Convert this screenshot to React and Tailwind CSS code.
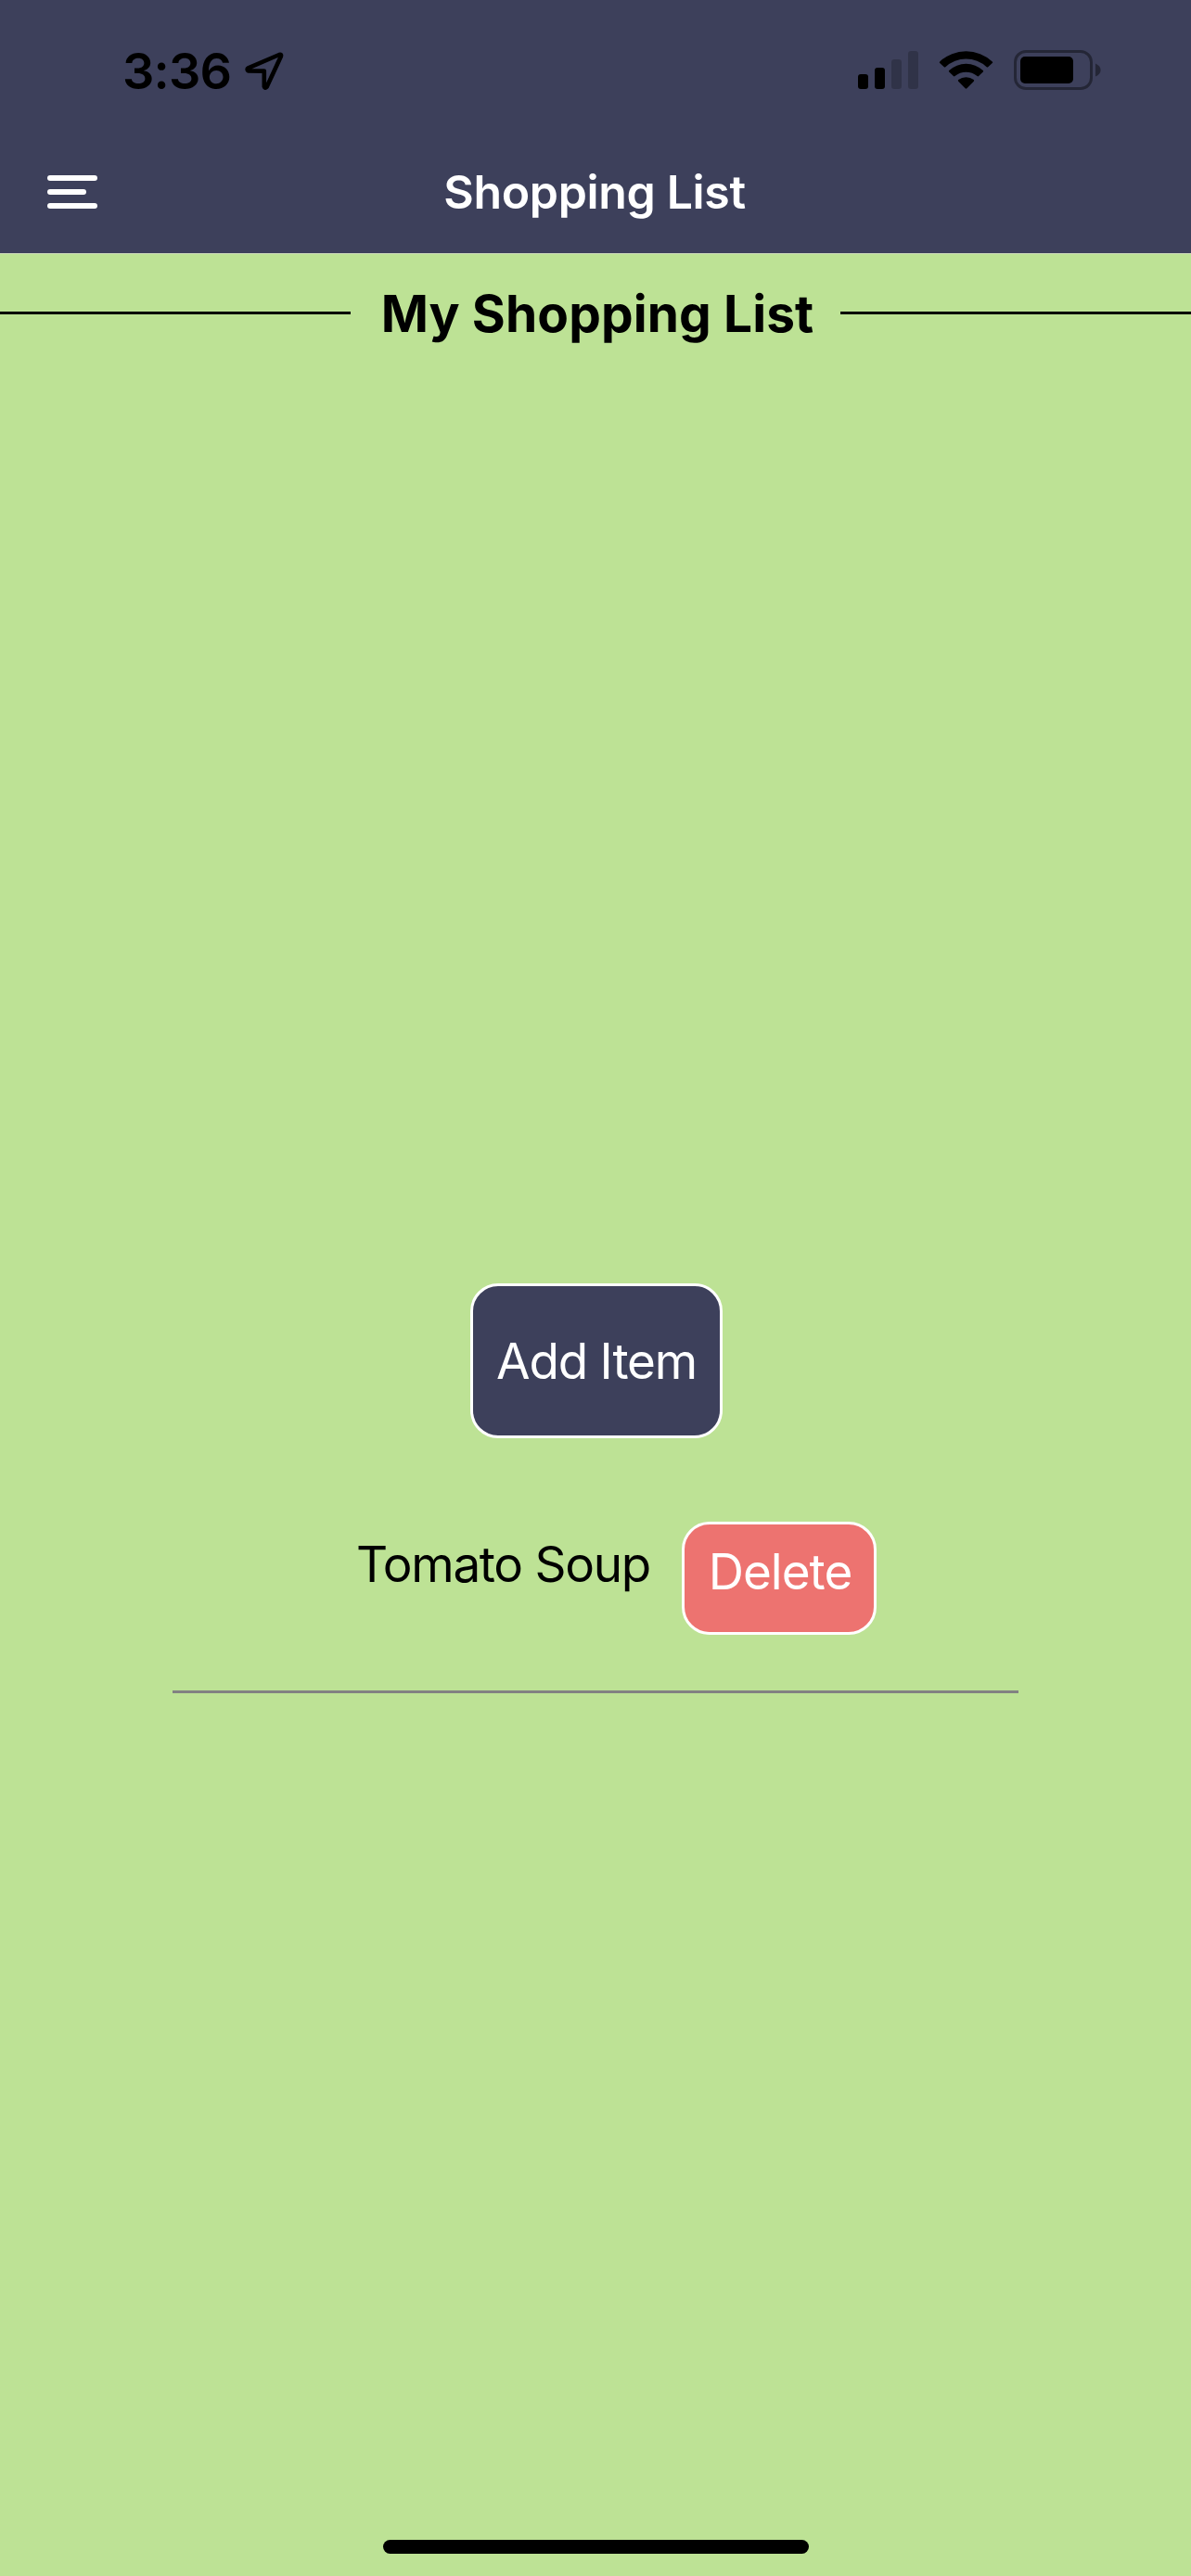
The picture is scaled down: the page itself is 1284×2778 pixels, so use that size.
function StatusBar() {
  return (
    <div className="flex h-[141px] items-start justify-between pl-[132px] pr-[97px]">
      <div className="flex h-[154px] items-center">
        <span className="w-[132px] whitespace-nowrap text-[54px] font-semibold leading-none tracking-[-0.8px]">3:36</span>
        <svg width="42" height="42" viewBox="0 0 42 42" fill="none" stroke="#000" strokeWidth="4.6" strokeLinejoin="round">
          <path d="M2.6 18.6 Q2.6 17.9 3.6 17.4 L37 3 Q39.8 2.2 38.8 5 L23.6 37.8 Q21.6 40 20.8 37.4 L20.8 20.6 L4 20.4 Q2.6 20.2 2.6 18.6 Z" />
        </svg>
      </div>
      <svg className="mt-[48px]" width="264" height="54" viewBox="923 48 264 54">
        <rect x="925" y="80" width="11" height="16" rx="3" />
        <rect x="943" y="73" width="11" height="23" rx="3" />
        <rect x="961" y="64" width="11" height="32" rx="3" fillOpacity="0.2" />
        <rect x="979" y="55" width="11" height="41" rx="3" fillOpacity="0.2" />
        <path d="M1013.2 66.4 Q1012.4 67.2 1013.2 68 L1017.8 72.3 Q1018.5 72.9 1019.3 72.2 A32.5 32.5 0 0 1 1063.7 72.2 Q1064.5 72.9 1065.2 72.3 L1069.8 68 Q1070.6 67.2 1069.8 66.4 A41.5 41.5 0 0 0 1013.2 66.4 Z" />
        <path d="M1023.2 76 Q1022.4 76.8 1023.2 77.6 L1027.9 82.1 Q1028.7 82.8 1029.5 82.1 A18.5 18.5 0 0 1 1053.5 82.1 Q1054.3 82.8 1055.1 82.1 L1059.8 77.6 Q1060.6 76.8 1059.8 76 A27 27 0 0 0 1023.2 76 Z" />
        <path d="M1033.2 86 Q1032.4 86.9 1033.2 87.7 L1040.6 95.2 Q1041.5 96.1 1042.4 95.2 L1049.8 87.7 Q1050.6 86.9 1049.8 86 A13.5 13.5 0 0 0 1033.2 86 Z" />
        <rect x="1094.5" y="55.5" width="82" height="40" rx="11.5" fill="none" stroke="#000" strokeOpacity="0.4" strokeWidth="3" />
        <rect x="1100" y="61" width="57" height="29" rx="5" />
        <path d="M1181 68.5 Q1186.6 71 1186.6 75.5 Q1186.6 80 1181 82.5 Z" fillOpacity="0.4" />
      </svg>
    </div>
  );
}

function NavBar() {
  return (
    <div className="grid h-[133px] grid-cols-[1fr_auto_1fr] items-center border-b border-[#d0dcbc]">
      <button aria-label="Menu" className="flex w-[105px] flex-col items-start gap-[9px] pl-[51px]">
        <span className="h-[6px] w-[54px] rounded-full bg-white" />
        <span className="h-[6px] w-[42px] rounded-full bg-white" />
        <span className="h-[6px] w-[54px] rounded-full bg-white" />
      </button>
      <h1 className="whitespace-nowrap pr-[2px] text-[50px] font-semibold leading-[60px] tracking-[-0.35px] text-white">
        Shopping List
      </h1>
      <span />
    </div>
  );
}

export default function App() {
  return (
    <div className="flex h-[2778px] w-[1284px] flex-col bg-[#bde295] font-['Inter',sans-serif] text-black">
      <header className="bg-[#3d405b]">
        <StatusBar />
        <NavBar />
      </header>

      <div className="mt-[28px] flex h-[71px] items-center">
        <span className="h-[3px] w-[378px] bg-black" />
        <h2 className="flex-1 whitespace-nowrap pl-[4px] text-center text-[55px] font-bold leading-[72px] tracking-[0.1px]">
          My Shopping List
        </h2>
        <span className="h-[3px] w-[378px] bg-black" />
      </div>

      <main className="mt-[1011px] flex flex-1 flex-col items-center">
        <button className="ml-[2px] flex h-[167px] w-[272px] items-center justify-center whitespace-nowrap rounded-[30px] border-[3px] border-white bg-[#3d405b] pt-[2px] text-[53px] leading-none tracking-[-1.2px] text-white">
          Add Item
        </button>
        <div className="mt-[90px] flex h-[185px] w-[912px] items-start border-b-[3px] border-[#828282] pl-[198px]">
          <span className="mt-[16px] w-[351px] whitespace-nowrap text-[53px] leading-[60px] tracking-[-1.3px]">Tomato Soup</span>
          <button className="flex h-[122px] w-[210px] items-start justify-center whitespace-nowrap rounded-[30px] border-[3px] border-white bg-[#ed7370] pl-[2px] pt-[21px] text-[53px] leading-[60px] tracking-[-1px] text-white">
            Delete
          </button>
        </div>
      </main>

      <footer className="flex h-[39px] justify-center">
        <span className="h-[15px] w-[459px] rounded-full bg-black" />
      </footer>
    </div>
  );
}
